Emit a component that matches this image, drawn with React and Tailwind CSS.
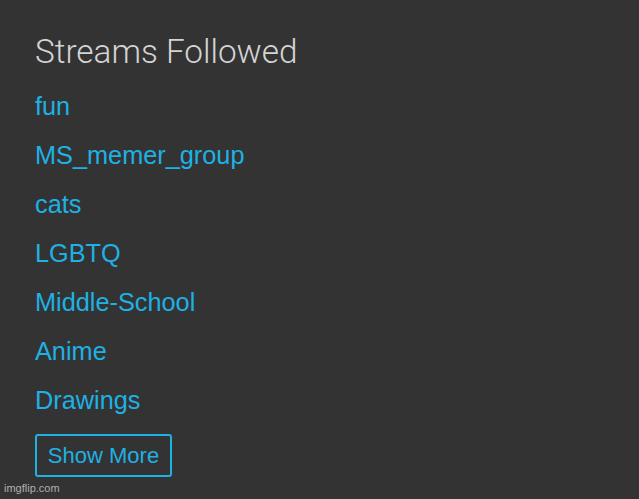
const streams = ['fun', 'MS_memer_group', 'cats', 'LGBTQ', 'Middle-School', 'Anime', 'Drawings'];

export default function App() {
  return (
    <div className="relative w-[639px] h-[499px] bg-[#333333] overflow-hidden" style={{ fontFamily: '"Liberation Sans", Arial, sans-serif' }}>
      <div className="pl-[35px] pt-[32px]">
        <h2 className="text-[33.3px] leading-[40px] text-[#d4d4d4]" style={{ fontFamily: 'Roboto, "Liberation Sans", sans-serif', fontWeight: 300 }}>
          Streams Followed
        </h2>
        <ul className="mt-[10px]">
          {streams.map((s) => (
            <li key={s} className="h-[49px] leading-[49px] text-[25.3px] text-[#1eb1e3]">
              <a href="#">{s}</a>
            </li>
          ))}
        </ul>
        <button className="mt-[9px] w-[137px] h-[43px] border-2 border-[#1eb1e3] rounded-[3px] text-[22px] text-[#1eb1e3] flex items-center justify-center">
          Show More
        </button>
      </div>
      <div className="absolute left-[4px] bottom-[3px] text-[11px] text-[#b0b0b0]">imgflip.com</div>
    </div>
  );
}
